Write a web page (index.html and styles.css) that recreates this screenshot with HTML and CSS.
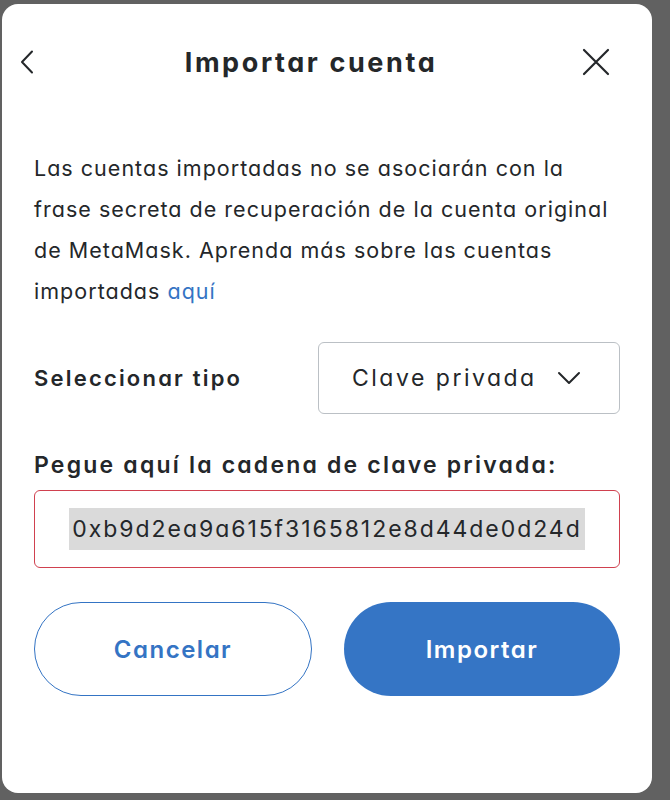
FILE: index.html
```html
<!DOCTYPE html>
<html lang="es">
<head>
<meta charset="utf-8">
<title>Importar cuenta</title>
<link rel="stylesheet" href="styles.css">
</head>
<body>
<div class="modal">
  <div class="header">
    <button class="icon-btn back" aria-label="Atrás">
      <svg width="14" height="24" viewBox="0 0 14 24"><path d="M12 1.5 L2 12 L12 22.5" fill="none" stroke="#24272a" stroke-width="2" stroke-linecap="round" stroke-linejoin="round"/></svg>
    </button>
    <h1 class="title">Importar cuenta</h1>
    <button class="icon-btn close" aria-label="Cerrar">
      <svg width="28" height="28" viewBox="0 0 28 28"><path d="M2 2 L26 26 M26 2 L2 26" fill="none" stroke="#24272a" stroke-width="2.2" stroke-linecap="round"/></svg>
    </button>
  </div>
  <p class="desc">Las cuentas importadas no se asociarán con la frase secreta de recuperación de la cuenta original de MetaMask. Aprenda más sobre las cuentas importadas <a href="#" class="link">aquí</a></p>
  <div class="select-row">
    <span class="select-label">Seleccionar tipo</span>
    <div class="select">
      <span>Clave privada</span>
      <svg width="24" height="14" viewBox="0 0 24 14"><path d="M2 2 L12 12 L22 2" fill="none" stroke="#24272a" stroke-width="2" stroke-linecap="round" stroke-linejoin="round"/></svg>
    </div>
  </div>
  <label class="field-label">Pegue aquí la cadena de clave privada:</label>
  <div class="input"><span class="selected">0xb9d2ea9a615f3165812e8d44de0d24d</span></div>
  <div class="actions">
    <button class="btn btn-secondary">Cancelar</button>
    <button class="btn btn-primary">Importar</button>
  </div>
</div>
</body>
</html>
```
FILE: styles.css
```css
* { box-sizing: border-box; }
html, body { margin: 0; padding: 0; }
body {
  background: #616161;
  width: 670px;
  height: 800px;
  font-family: Inter, "Noto Sans", sans-serif;
  font-feature-settings: "cv11" 1;
  color: #24272a;
  padding: 4px 18px 0 2px;
}
.modal {
  background: #fff;
  border-radius: 16px;
  height: 789px;
  padding: 36px 32px 0 32px;
}
.header {
  display: flex;
  align-items: center;
  justify-content: space-between;
  height: 44px;
}
.icon-btn {
  background: none;
  border: 0;
  padding: 0;
  display: flex;
  align-items: center;
}
.back { margin-left: -14px; }
.close { margin-right: 10px; }
.title {
  margin: 0 0 0 6px;
  font-size: 27px;
  font-weight: 700;
  letter-spacing: 2.6px;
}
.desc {
  margin: 64px 0 0 0;
  font-size: 21.5px;
  line-height: 41px;
  letter-spacing: 1.02px;
}
.link { color: #3474c4; text-decoration: none; }
.select-row {
  margin-top: 30px;
  display: flex;
  align-items: center;
  justify-content: space-between;
}
.select-label {
  font-size: 22px;
  font-weight: 600;
  letter-spacing: 2.2px;
}
.select {
  width: 302px;
  height: 72px;
  border: 1px solid #bbc0c5;
  border-radius: 6px;
  display: flex;
  align-items: center;
  justify-content: space-between;
  padding: 0 38px 0 33px;
  font-size: 23px;
  letter-spacing: 2.5px;
}
.field-label {
  display: block;
  margin-top: 36px;
  font-size: 23px;
  font-weight: 600;
  line-height: 30px;
  letter-spacing: 2.2px;
}
.input {
  margin-top: 10px;
  height: 78px;
  border: 1px solid #d0414f;
  border-radius: 6px;
  display: flex;
  align-items: center;
  justify-content: center;
  font-size: 23px;
  letter-spacing: 1.95px;
}
.selected {
  background: #dadada;
  padding: 7px 3px;
}
.actions {
  margin-top: 34px;
  display: flex;
  gap: 32px;
}
.btn {
  flex: 1;
  height: 94px;
  border-radius: 47px;
  font-family: Inter, "Noto Sans", sans-serif;
  font-feature-settings: "cv11" 1;
  font-size: 24px;
  font-weight: 600;
  letter-spacing: 1.5px;
}
.btn-secondary {
  background: #fff;
  color: #3474c4;
  border: 1.5px solid #3474c4;
}
.btn-primary {
  background: #3575c5;
  color: #fff;
  border: 0;
}
```
